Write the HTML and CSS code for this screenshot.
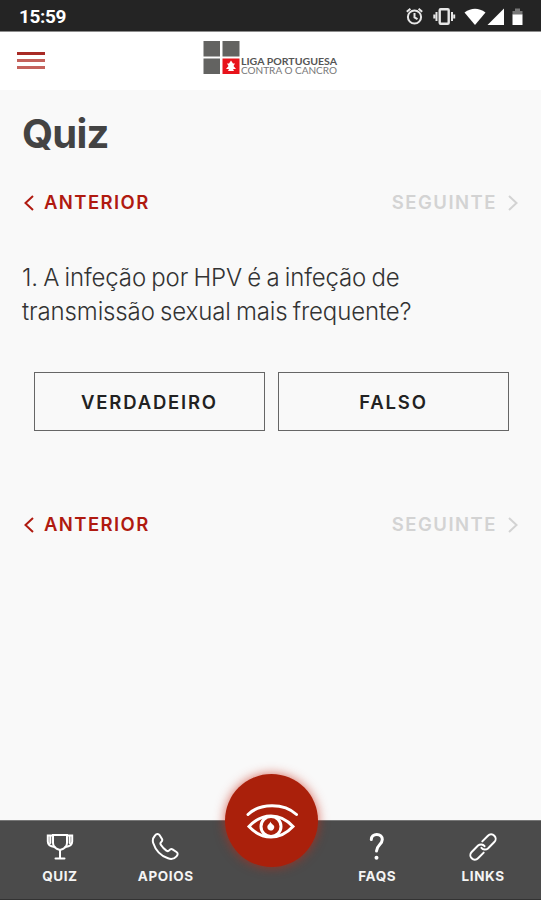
FILE: index.html
```html
<!DOCTYPE html>
<html lang="pt">
<head>
  <meta charset="UTF-8">
  <title>Quiz - Liga Portuguesa Contra o Cancro</title>
  <meta name="viewport" content="width=device-width, initial-scale=1.0" />
  <link rel="stylesheet" href="styles.css">
</head>
<body>

<div class="status-bar">
  <span class="clock">15:59</span>
  <svg class="status-icons" width="122" height="22" viewBox="0 0 122 22">
    <!-- alarm -->
    <g fill="none" stroke="#e6e6e6" stroke-width="2">
      <circle cx="10.500" cy="12" r="6.6" />
      <path d="M10.500 8v4.400l3 1.800M2.800 6.800l3.600-3M18.200 6.800l-3.600-3" />
    </g>
    <!-- vibrate -->
    <g fill="none" stroke="#e6e6e6" stroke-width="2.4">
      <rect x="35.700" y="4.200" width="9" height="14.600" rx="1" />
      <path d="M32.500 7v9M48 7v9M30.300 9.500v4M50.200 9.500v4" stroke-width="2" />
    </g>
    <!-- wifi, signal, battery -->
    <path fill="#fff" d="M60.500 7.500Q71 0 81.500 7.500L71 20z" />
    <path fill="#fff" d="M100 3.500V20H83.500z" />
    <path fill="#777" d="M108.500 6h2.500V3.500h5V6h2.500v4h-10z" />
    <path fill="#fff" d="M108.500 9.500h10V20h-10z" />
  </svg>
</div>

<header>
  <button class="menu" aria-label="Menu"><span></span><span></span><span></span></button>
  <svg class="logo" width="136" height="36" viewBox="0 0 136 36">
    <g fill="#636361">
      <rect x="0.500" y="1" width="16.500" height="15.500" />
      <rect x="19.500" y="1" width="17" height="15.500" />
      <rect x="0.500" y="18.500" width="16.500" height="15.500" />
    </g>
    <rect x="19.500" y="18.500" width="17" height="15.500" fill="#e8131b" />
    <path fill="#fff" d="M28 20.500l2 3h2l-1.500 2.500 2.500 3h-3l1 2h-6l1-2h-3l2.500-3-1.500-2.500h2z" />
    <text class="logo-top" x="38" y="25" textLength="96" lengthAdjust="spacingAndGlyphs">LIGA PORTUGUESA</text>
    <text class="logo-bottom" x="38" y="34" textLength="96" lengthAdjust="spacingAndGlyphs">CONTRA O CANCRO</text>
  </svg>
</header>

<main>
  <h1>Quiz</h1>

  <div class="pager">
    <a class="prev">
      <svg width="12" height="18" viewBox="0 0 12 18"><path d="M11 2L3.500 9l7.500 7" /></svg>
      ANTERIOR
    </a>
    <a class="next">
      SEGUINTE
      <svg width="12" height="18" viewBox="0 0 12 18"><path d="M2 2l7.500 7L2 16" /></svg>
    </a>
  </div>

  <p class="question">1. A infeção por HPV é a infeção de<br>transmissão sexual mais frequente?</p>

  <div class="answers">
    <button class="true">VERDADEIRO</button>
    <button class="false">FALSO</button>
  </div>

  <div class="pager">
    <a class="prev">
      <svg width="12" height="18" viewBox="0 0 12 18"><path d="M11 2L3.500 9l7.500 7" /></svg>
      ANTERIOR
    </a>
    <a class="next">
      SEGUINTE
      <svg width="12" height="18" viewBox="0 0 12 18"><path d="M2 2l7.500 7L2 16" /></svg>
    </a>
  </div>
</main>

<nav>
  <a class="tab">
    <svg width="30" height="30" viewBox="0 0 30 30">
      <path d="M8 3h14v8c0 4-3.500 6-7 7-3.500-1-7-3-7-7zM15 18v8M10.500 26.500h9" />
      <path d="M8 3.500H2.800v6c0 3 3 5 7 5.500M22 3.500h5.200v6c0 3-3 5-7 5.500M5.300 4v7M24.700 4v7" stroke-width="1.400" />
    </svg>
    <span>QUIZ</span>
  </a>
  <a class="tab">
    <svg width="30" height="30" viewBox="0 0 30 30">
      <path d="M4 3.500C5.500 1.500 7.500 1.500 8.500 3l2.500 4c.8 1.400 0 2.300-1 3.200-1 .9-.8 1.600 0 2.800 1.400 2.200 3.200 4 5.400 5.600 1.200.8 2 .8 2.800-.2 1-1.200 2-1.800 3.300-1l4 2.600c1.700 1.200 1.400 2.700 0 4.300-2 2.300-5 3.300-8.500 2C10 24 4.500 18 2.200 11 1.200 8 2 5.800 4 3.500z" />
    </svg>
    <span>APOIOS</span>
  </a>
  <div class="tab-gap"></div>
  <a class="tab">
    <svg width="30" height="30" viewBox="0 0 30 30">
      <path class="mark" d="M9.300 7.500C9.300 4.500 11.500 2.500 14.800 2.500s5.500 2 5.500 5c0 5-5.800 5.500-5.800 11.500" />
      <circle class="dot" cx="14.500" cy="25.800" r="2" />
    </svg>
    <span>FAQS</span>
  </a>
  <a class="tab">
    <svg width="30" height="30" viewBox="0 0 30 30">
      <g transform="rotate(-45 15 15)">
        <path d="M11.500 19.500H3.500a4.500 4.500 0 0 1 0-9h9a4.500 4.500 0 0 1 4.200 5" />
        <path d="M18.500 10.500h8a4.500 4.500 0 0 1 0 9h-9a4.500 4.500 0 0 1-4.200-5" />
      </g>
    </svg>
    <span>LINKS</span>
  </a>
  <a class="eye-button" aria-label="Início">
    <svg width="54" height="38" viewBox="0 0 54 38">
      <path d="M3 12.500C15 .8 39 .8 51.500 12.500" />
      <path d="M4 24.500C17 10.500 35 10.500 48 24.500C35 38.500 17 38.500 4 24.500z" />
      <circle cx="26" cy="24.500" r="10" />
      <path class="pupil" d="M25.500 19.500c.2 2.500 3.500 2.800 3.800 5.300a3.500 3.500 0 1 1-6.500-1.500c.8-1.300 2-1.800 2.700-3.800z" />
    </svg>
  </a>
</nav>

</body>
</html>
```
FILE: styles.css
```css
/* ============================
   Base Styling
============================ */
* {
  box-sizing: border-box;
}

body {
  font-family: Inter, "Liberation Sans", sans-serif;
  margin: 0;
  height: 100vh;
  display: flex;
  flex-direction: column;
  background: #f9f9f9;
  color: #333;
}

button {
  font-family: inherit;
  padding: 0;
  background: none;
  cursor: pointer;
}

svg {
  display: block;
}

/* ============================
   Status Bar and Header
============================ */
.status-bar {
  height: 32px;
  padding: 0 15px 0 19px;
  display: flex;
  align-items: center;
  justify-content: space-between;
  background: #242424;
  border-bottom: 1px solid #8c8c8c;
}

.clock {
  font-family: Roboto, sans-serif;
  font-size: 19px;
  font-weight: 700;
  letter-spacing: -0.4px;
  color: #fff;
  padding-top: 2px;
}

header {
  height: 58px;
  padding: 0 17px;
  display: flex;
  background: #fff;
}

.menu {
  width: 28px;
  margin-top: 20px;
  border: none;
  display: flex;
  flex-direction: column;
  gap: 4px;
}

.menu span {
  width: 28px;
  height: 3px;
  background: #c4625c;
}

.menu span:first-child {
  background: #a82a25;
}

.logo {
  margin: 8px 0 0 158px;
}

.logo-top {
  font: 700 8.5px Lato, sans-serif;
  fill: #555;
}

.logo-bottom {
  font: 400 9px Lato, sans-serif;
  fill: #777;
}

/* ============================
   Quiz
============================ */
main {
  flex: 1;
  padding: 20px 22px 0;
}

h1 {
  margin: 0;
  font-size: 40px;
  line-height: 48px;
  font-weight: 700;
  letter-spacing: -0.8px;
  color: #434343;
}

.pager {
  display: flex;
  justify-content: space-between;
  margin-top: 32px;
  font-size: 18.5px;
  line-height: 25px;
  font-weight: 600;
  letter-spacing: 1.5px;
}

.pager a {
  display: flex;
  align-items: center;
}

.pager path {
  fill: none;
  stroke: currentColor;
  stroke-width: 2;
}

.prev {
  gap: 10px;
  letter-spacing: 1.4px;
  color: #b01a10;
}

.next {
  gap: 10px;
  color: #d3d3d3;
}

.question {
  margin: 46px 0 0;
  font-size: 24px;
  line-height: 34px;
  font-weight: 300;
  letter-spacing: -0.13px;
  word-spacing: -1.35px;
}

.answers {
  display: flex;
  gap: 13px;
  margin: 43px 10px 0 12px;
}

.answers button {
  flex: 1;
  height: 59px;
  border: 1px solid #666;
  font-size: 18.5px;
  font-weight: 600;
  letter-spacing: 1.8px;
  color: #222;
}

.answers + .pager {
  margin-top: 81px;
}

/* ============================
   Bottom Navigation
============================ */
nav {
  position: relative;
  height: 80px;
  padding: 0 5px 0 7px;
  display: grid;
  grid-template-columns: repeat(5, 1fr);
  background: #4b4b4b;
  border-top: 1px solid #777;
  border-bottom: 1px solid #333;
}

.tab {
  display: flex;
  flex-direction: column;
  align-items: center;
  padding-top: 11px;
  gap: 5px;
  font-size: 13.5px;
  line-height: 18px;
  font-weight: 700;
  letter-spacing: 0.6px;
  color: #f4f4f4;
}

.tab path,
.eye-button svg {
  fill: none;
  stroke: #fff;
  stroke-width: 2;
  stroke-linecap: round;
}

.tab .mark {
  stroke-width: 3;
}

.tab .dot {
  fill: #fff;
}

.eye-button {
  position: absolute;
  left: 225px;
  top: -47px;
  width: 93px;
  height: 93px;
  border-radius: 50%;
  display: flex;
  align-items: center;
  justify-content: center;
  background: #aa200b;
  box-shadow: 0 0 11px rgba(200, 40, 20, 0.7);
}

.eye-button svg {
  stroke-width: 3;
}

.eye-button .pupil {
  fill: #fff;
  stroke: none;
}
```
